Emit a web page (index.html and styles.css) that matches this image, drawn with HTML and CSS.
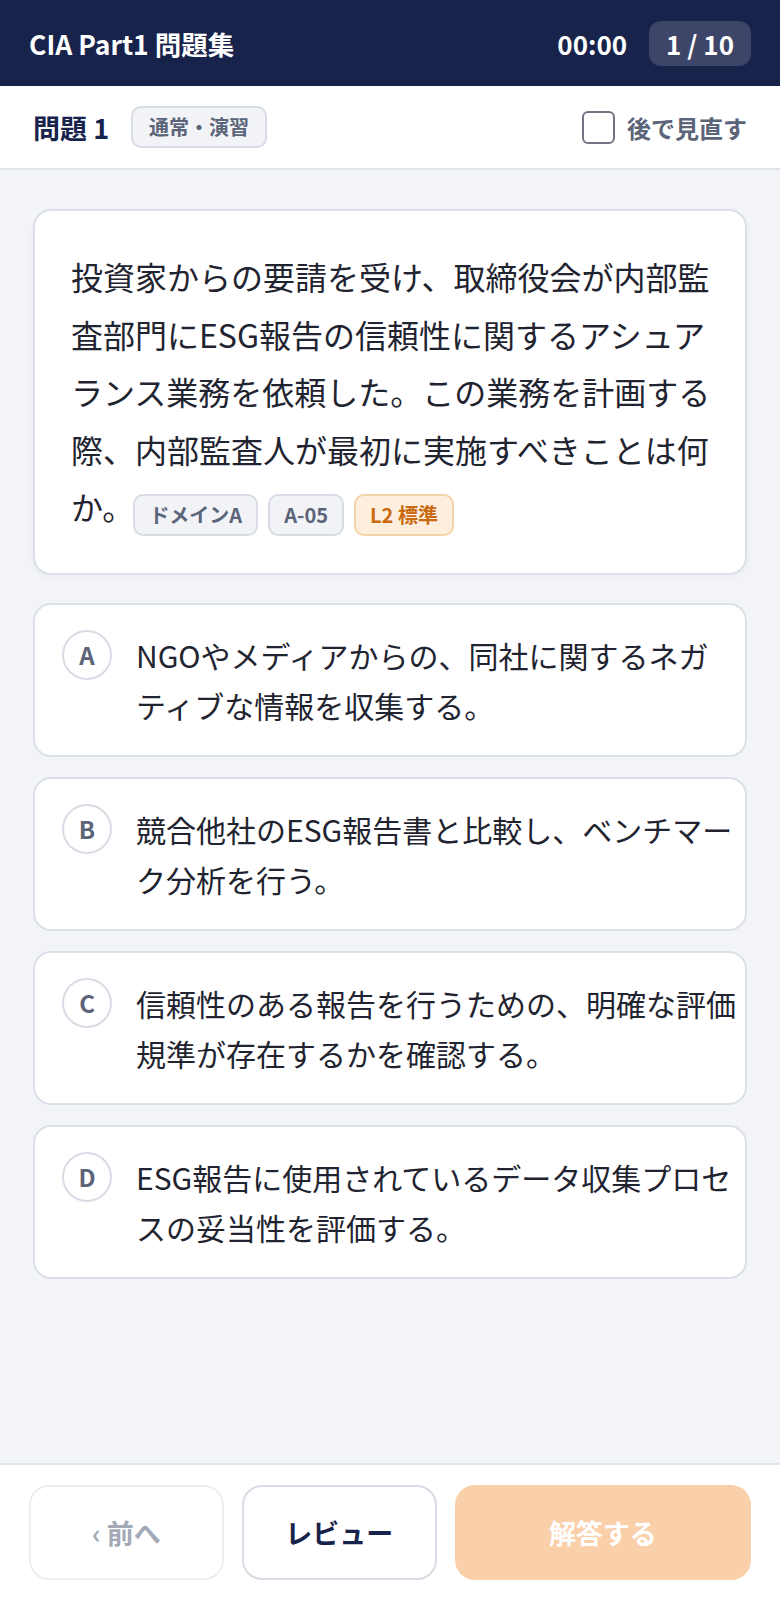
FILE: index.html
```html
<!DOCTYPE html>
<html lang="ja">
<head>
    <meta charset="UTF-8">
    <meta name="viewport" content="width=device-width, initial-scale=1.0">
    <title>CIA Part1 問題集</title>
    <link rel="stylesheet" href="styles.css">
</head>
<body>

<div class="app">
    <!-- Top bar -->
    <header class="topbar">
        <div class="app-title">CIA Part1 問題集</div>
        <div class="topbar-right">
            <span class="timer">00:00</span>
            <span class="progress">1 / 10</span>
        </div>
    </header>

    <!-- Question meta -->
    <div class="qbar">
        <div class="qbar-left">
            <span class="qnum">問題 1</span>
            <span class="tag">通常・演習</span>
        </div>
        <label class="review-later">
            <span class="checkbox"></span>
            <span>後で見直す</span>
        </label>
    </div>

    <main class="content">
        <!-- Question -->
        <div class="question-card">
            <span class="question-text">投資家からの要請を受け、取締役会が内部監査部門にESG報告の信頼性に関するアシュアランス業務を依頼した。この業務を計画する際、内部監査人が最初に実施すべきことは何か。</span><span class="tag tag-inline">ドメインA</span><span class="tag tag-inline">A-05</span><span class="tag tag-inline tag-level">L2 標準</span>
        </div>

        <!-- Choices -->
        <div class="choices">
            <div class="choice">
                <span class="choice-key">A</span>
                <span class="choice-text">NGOやメディアからの、同社に関するネガティブな情報を収集する。</span>
            </div>
            <div class="choice">
                <span class="choice-key">B</span>
                <span class="choice-text">競合他社のESG報告書と比較し、ベンチマーク分析を行う。</span>
            </div>
            <div class="choice">
                <span class="choice-key">C</span>
                <span class="choice-text">信頼性のある報告を行うための、明確な評価規準が存在するかを確認する。</span>
            </div>
            <div class="choice">
                <span class="choice-key">D</span>
                <span class="choice-text">ESG報告に使用されているデータ収集プロセスの妥当性を評価する。</span>
            </div>
        </div>
    </main>

    <!-- Bottom actions -->
    <footer class="actions">
        <button class="btn btn-prev" disabled>‹ 前へ</button>
        <button class="btn btn-review">レビュー</button>
        <button class="btn btn-answer" disabled>解答する</button>
    </footer>
</div>

</body>
</html>
```

FILE: styles.css
```css
* {
    box-sizing: border-box;
}

body {
    margin: 0;
    font-family: "Noto Sans CJK JP", "Noto Sans", sans-serif;
    background-color: #f2f4f8;
    color: #1f2430;
    line-break: strict;
}

.app {
    display: flex;
    flex-direction: column;
    min-height: 1600px;
}

.topbar {
    height: 86px;
    background-color: #18234c;
    color: white;
    display: flex;
    align-items: center;
    justify-content: space-between;
    padding: 0 29px;
}

.app-title {
    font-size: 26.5px;
    font-weight: bold;
}

.topbar-right {
    display: flex;
    align-items: center;
    gap: 22px;
}

.timer {
    font-size: 26px;
    font-weight: bold;
}

.progress {
    font-size: 26px;
    font-weight: bold;
    background-color: rgba(255, 255, 255, 0.16);
    border-radius: 12px;
    padding: 4px 17px;
}

.qbar {
    height: 84px;
    background-color: white;
    border-bottom: 2px solid #dfe3ea;
    display: flex;
    align-items: center;
    justify-content: space-between;
    padding: 0 33px;
}

.qbar-left {
    display: flex;
    align-items: center;
    gap: 22px;
}

.qnum {
    font-size: 27px;
    font-weight: bold;
    color: #18234c;
}

.tag {
    display: inline-flex;
    align-items: center;
    height: 42px;
    padding: 0 14px;
    font-size: 20px;
    font-weight: bold;
    color: #5b6478;
    background-color: #f1f3f7;
    border: 2px solid #d8dce5;
    border-radius: 10px;
    line-height: 1;
}

.qbar .tag {
    padding: 0 16px;
}

.review-later {
    display: flex;
    align-items: center;
    gap: 12px;
    font-size: 24px;
    font-weight: bold;
    color: #5b6478;
}

.checkbox {
    width: 33px;
    height: 33px;
    border: 2px solid #6f7480;
    border-radius: 6px;
    background-color: white;
}

.content {
    flex: 1;
    padding: 39px 33px;
}

.question-card {
    background-color: white;
    border: 2px solid #dce0e7;
    border-radius: 18px;
    padding: 37px 28px 37px 36px;
    font-size: 32px;
    line-height: 1.8;
    box-shadow: 0 2px 6px rgba(20, 30, 60, 0.04);
}

.tag-inline {
    vertical-align: middle;
    margin-left: 10px;
    position: relative;
    top: 3px;
}

.question-text + .tag-inline {
    margin-left: -1px;
}

.tag-level {
    color: #c96a10;
    background-color: #fdeedd;
    border-color: #f5d3a8;
}

.choices {
    display: flex;
    flex-direction: column;
    gap: 20px;
    margin-top: 28px;
}

.choice {
    display: flex;
    align-items: flex-start;
    gap: 24px;
    background-color: white;
    border: 2px solid #dce0e7;
    border-radius: 18px;
    padding: 25px 6px 25px 27px;
}

.choice-key {
    flex-shrink: 0;
    width: 50px;
    height: 50px;
    border: 2px solid #d8dce5;
    border-radius: 50%;
    display: flex;
    align-items: center;
    justify-content: center;
    font-size: 24px;
    font-weight: bold;
    color: #5b6478;
}

.choice-text {
    font-size: 30px;
    line-height: 50px;
}

.actions {
    background-color: white;
    border-top: 2px solid #dfe3ea;
    display: grid;
    grid-template-columns: 1fr 1fr 1.52fr;
    gap: 18px;
    padding: 20px 29px 20px;
}

.btn {
    height: 95px;
    padding: 0;
    border-radius: 20px;
    font-family: inherit;
    font-size: 27px;
    font-weight: bold;
    background-color: white;
    border: 2px solid #d8dce5;
    color: #18234c;
}

.btn-prev {
    border-color: #eceef3;
    color: #a3a9b6;
}

.btn-answer {
    border: none;
    background-color: #fad0aa;
    color: white;
}
```
